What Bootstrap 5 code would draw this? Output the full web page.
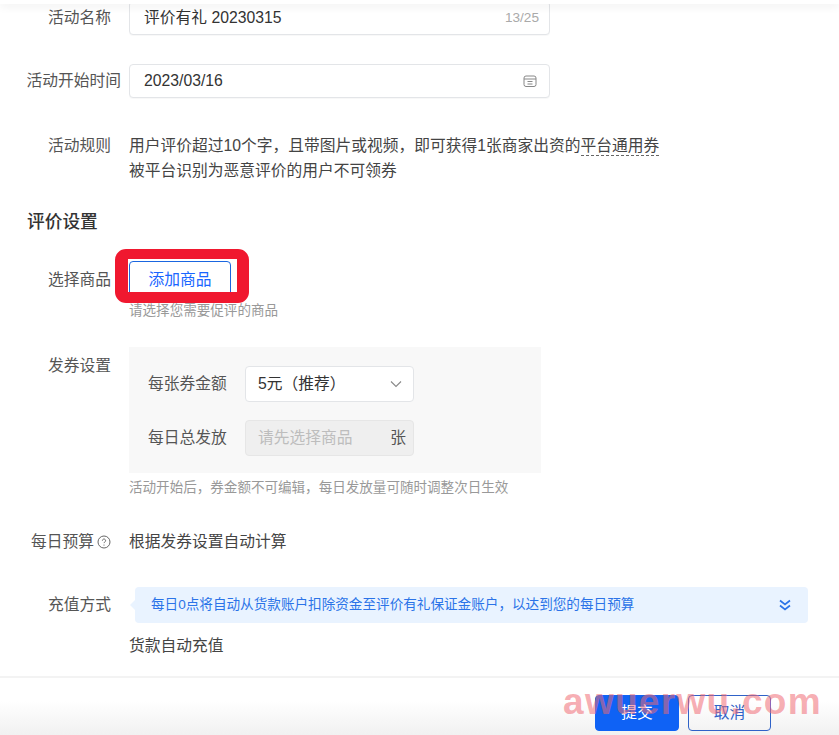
<!DOCTYPE html>
<html lang="zh-CN">
<head>
<meta charset="utf-8">
<title>评价有礼</title>
<link href="https://cdn.jsdelivr.net/npm/bootstrap@5.3.0/dist/css/bootstrap.min.css" rel="stylesheet">
<style>
html,body{height:735px;overflow:hidden}
body{font-family:"Liberation Sans","Noto Sans CJK SC",sans-serif;background:#fff;color:#444;font-size:15.75px;line-height:24px;position:relative}
.page-main{height:676px;overflow:hidden;padding-top:1px}
.top-shade{position:absolute;left:0;right:0;top:0;height:4px;background:#fff;box-shadow:0 2px 8px rgba(0,0,0,.09);z-index:3}
.form-line{display:flex;align-items:flex-start}
.line-label{flex:0 0 129px;width:129px;padding-right:18px;text-align:right;color:#555;white-space:nowrap}
.line-label.wide{padding-right:8px}
.line-label.tall{line-height:34px}
.line-body{flex:1 1 auto;min-width:0}
.fake-input{width:421px;height:34px;border:1px solid #e3e5e8;border-radius:4px;background:#fff;padding:0 10px 0 14px;display:flex;align-items:center;justify-content:space-between;color:#333;box-shadow:0 1px 1px rgba(0,0,0,.03)}
.counter{font-size:13.6px;color:#aaa}
.date-ico{margin-right:2px}
.l-date{margin-top:29px}
.l-rule{margin-top:35px;line-height:25px}
.dotted-term{border-bottom:1px dashed #666;padding-bottom:1px}
.sec-title{font-size:17.7px;font-weight:500;color:#333;margin:27px 0 0 27px;line-height:24px}
.l-goods{margin-top:27px}
.l-goods .line-label{padding-top:7px}
.btn-add{width:102px;height:38px;border:1px solid #1a66e0;border-radius:4px;background:#fff;color:#1966ff;font-size:15.75px;padding:0;line-height:36px;display:block}
.goods-wrap{position:relative;padding-top:0}
.red-mark{position:absolute;left:-14px;top:-12px;width:134px;height:54px;border:solid #f0182f;border-width:10px 12px 11px 13px;border-radius:11px;pointer-events:none}
.tip-text{font-size:13.55px;line-height:18px;color:#999;white-space:nowrap}
.l-goods .tip-text{margin-top:3px}
.l-coupon{margin-top:27px}
.l-coupon .line-label{padding-top:7px}
.grey-panel{width:412px;height:126px;background:#f8f8f8;padding:19px 0 0 19px}
.panel-row{display:flex;align-items:center;height:36px;color:#555}
.panel-row+.panel-row{margin-top:18px}
.panel-label{width:97px;white-space:nowrap}
.box-select,.box-off{width:169px;height:36px;border-radius:4px;display:flex;align-items:center;justify-content:space-between;padding:0 11px 0 12px}
.box-select{background:#fff;border:1px solid #e3e5e8;color:#333}
.box-off{background:#efefef;border:1px solid #e6e6e6;color:#bdbdbd;padding-right:7px}
.box-off b{font-weight:400;color:#555}
.l-coupon .tip-text{margin-top:6px}
.l-budget{margin-top:33px}
.help-mark{display:inline-block;vertical-align:-2px;margin-left:3px}
.l-budget .line-label{padding-right:18px}
.l-budget .line-label{display:flex;justify-content:flex-end;align-items:center}
.l-pay{margin-top:33px}
.l-pay .line-label{padding-top:6px}
.notice{position:relative;margin-left:6px;width:673px;height:36px;background:#e9f3ff;border-radius:4px;color:#2b73e8;font-size:13.6px;display:flex;align-items:center;justify-content:space-between;padding:0 16px 0 16px}
.notice::before{content:"";position:absolute;left:-5px;top:13px;border-style:solid;border-width:5px 5px 5px 0;border-color:transparent #e9f3ff transparent transparent}
.pay-val{margin-top:11px}
.page-foot{height:59px;border-top:2px solid #f3f3f3;background:linear-gradient(#fff 40%,#f1f1f1 100%);display:flex;justify-content:flex-end;padding:17px 68px 0 0;gap:9px}
.btn-send,.btn-undo{height:36px;border-radius:4px;font-size:15.75px;padding:0;line-height:34px}
.btn-send{width:84px;background:#0f62f5;border:1px solid #0f62f5;color:#fff}
.btn-undo{width:83px;background:transparent;border:1px solid #2f62c8;color:#2f62c8}
.wm{position:absolute;left:563px;top:682px;font-family:"Liberation Sans",sans-serif;font-weight:700;font-size:37px;line-height:40px;letter-spacing:1.3px;color:rgba(240,105,115,.55);z-index:4;pointer-events:none;white-space:nowrap}
</style>
</head>
<body>
<div class="top-shade"></div>
<main class="page-main">
  <div class="form-line">
    <div class="line-label tall">活动名称</div>
    <div class="line-body"><div class="fake-input"><span>评价有礼 20230315</span><span class="counter">13/25</span></div></div>
  </div>
  <div class="form-line l-date">
    <div class="line-label wide tall">活动开始时间</div>
    <div class="line-body"><div class="fake-input"><span>2023/03/16</span>
      <svg class="date-ico" width="14" height="14" viewBox="0 0 14 14" fill="none" stroke="#888" stroke-width="1"><rect x="1" y="2" width="12" height="10.5" rx="2"/><path d="M1 5h12M4.5 7.5h5M4.5 10h5"/></svg>
    </div></div>
  </div>
  <div class="form-line l-rule">
    <div class="line-label">活动规则</div>
    <div class="line-body">用户评价超过10个字，且带图片或视频，即可获得1张商家出资的<span class="dotted-term">平台通用券</span><br>被平台识别为恶意评价的用户不可领券</div>
  </div>
  <div class="sec-title">评价设置</div>
  <div class="form-line l-goods">
    <div class="line-label">选择商品</div>
    <div class="line-body">
      <div class="goods-wrap"><button type="button" class="btn-add">添加商品</button><div class="red-mark"></div></div>
      <div class="tip-text">请选择您需要促评的商品</div>
    </div>
  </div>
  <div class="form-line l-coupon">
    <div class="line-label">发券设置</div>
    <div class="line-body">
      <div class="grey-panel">
        <div class="panel-row"><span class="panel-label">每张券金额</span><div class="box-select"><span>5元（推荐）</span>
          <svg width="12" height="8" viewBox="0 0 12 8" fill="none" stroke="#888" stroke-width="1.1"><path d="M1 1.5l5 5 5-5"/></svg></div></div>
        <div class="panel-row"><span class="panel-label">每日总发放</span><div class="box-off"><span>请先选择商品</span><b>张</b></div></div>
      </div>
      <div class="tip-text">活动开始后，券金额不可编辑，每日发放量可随时调整次日生效</div>
    </div>
  </div>
  <div class="form-line l-budget">
    <div class="line-label">每日预算<svg class="help-mark" width="14" height="14" viewBox="0 0 14 14" fill="none" stroke="#666" stroke-width="1"><circle cx="7" cy="7" r="6"/><path d="M5.4 5.6a1.6 1.6 0 1 1 2.4 1.4c-.5.3-.8.6-.8 1.1"/><path d="M7 9.6v1"/></svg></div>
    <div class="line-body">根据发券设置自动计算</div>
  </div>
  <div class="form-line l-pay">
    <div class="line-label">充值方式</div>
    <div class="line-body">
      <div class="notice"><span>每日0点将自动从货款账户扣除资金至评价有礼保证金账户，以达到您的每日预算</span>
        <svg width="14" height="14" viewBox="0 0 14 14" fill="none" stroke="#2b73e8" stroke-width="1.7"><path d="M2 2.5l5 4 5-4M2 7.5l5 4 5-4"/></svg></div>
      <div class="pay-val">货款自动充值</div>
    </div>
  </div>
</main>
<footer class="page-foot">
  <button type="button" class="btn-send">提交</button>
  <button type="button" class="btn-undo">取消</button>
</footer>
<div class="wm">awuerwu.com</div>
<script src="https://cdn.jsdelivr.net/npm/bootstrap@5.3.0/dist/js/bootstrap.bundle.min.js"></script>
</body>
</html>
